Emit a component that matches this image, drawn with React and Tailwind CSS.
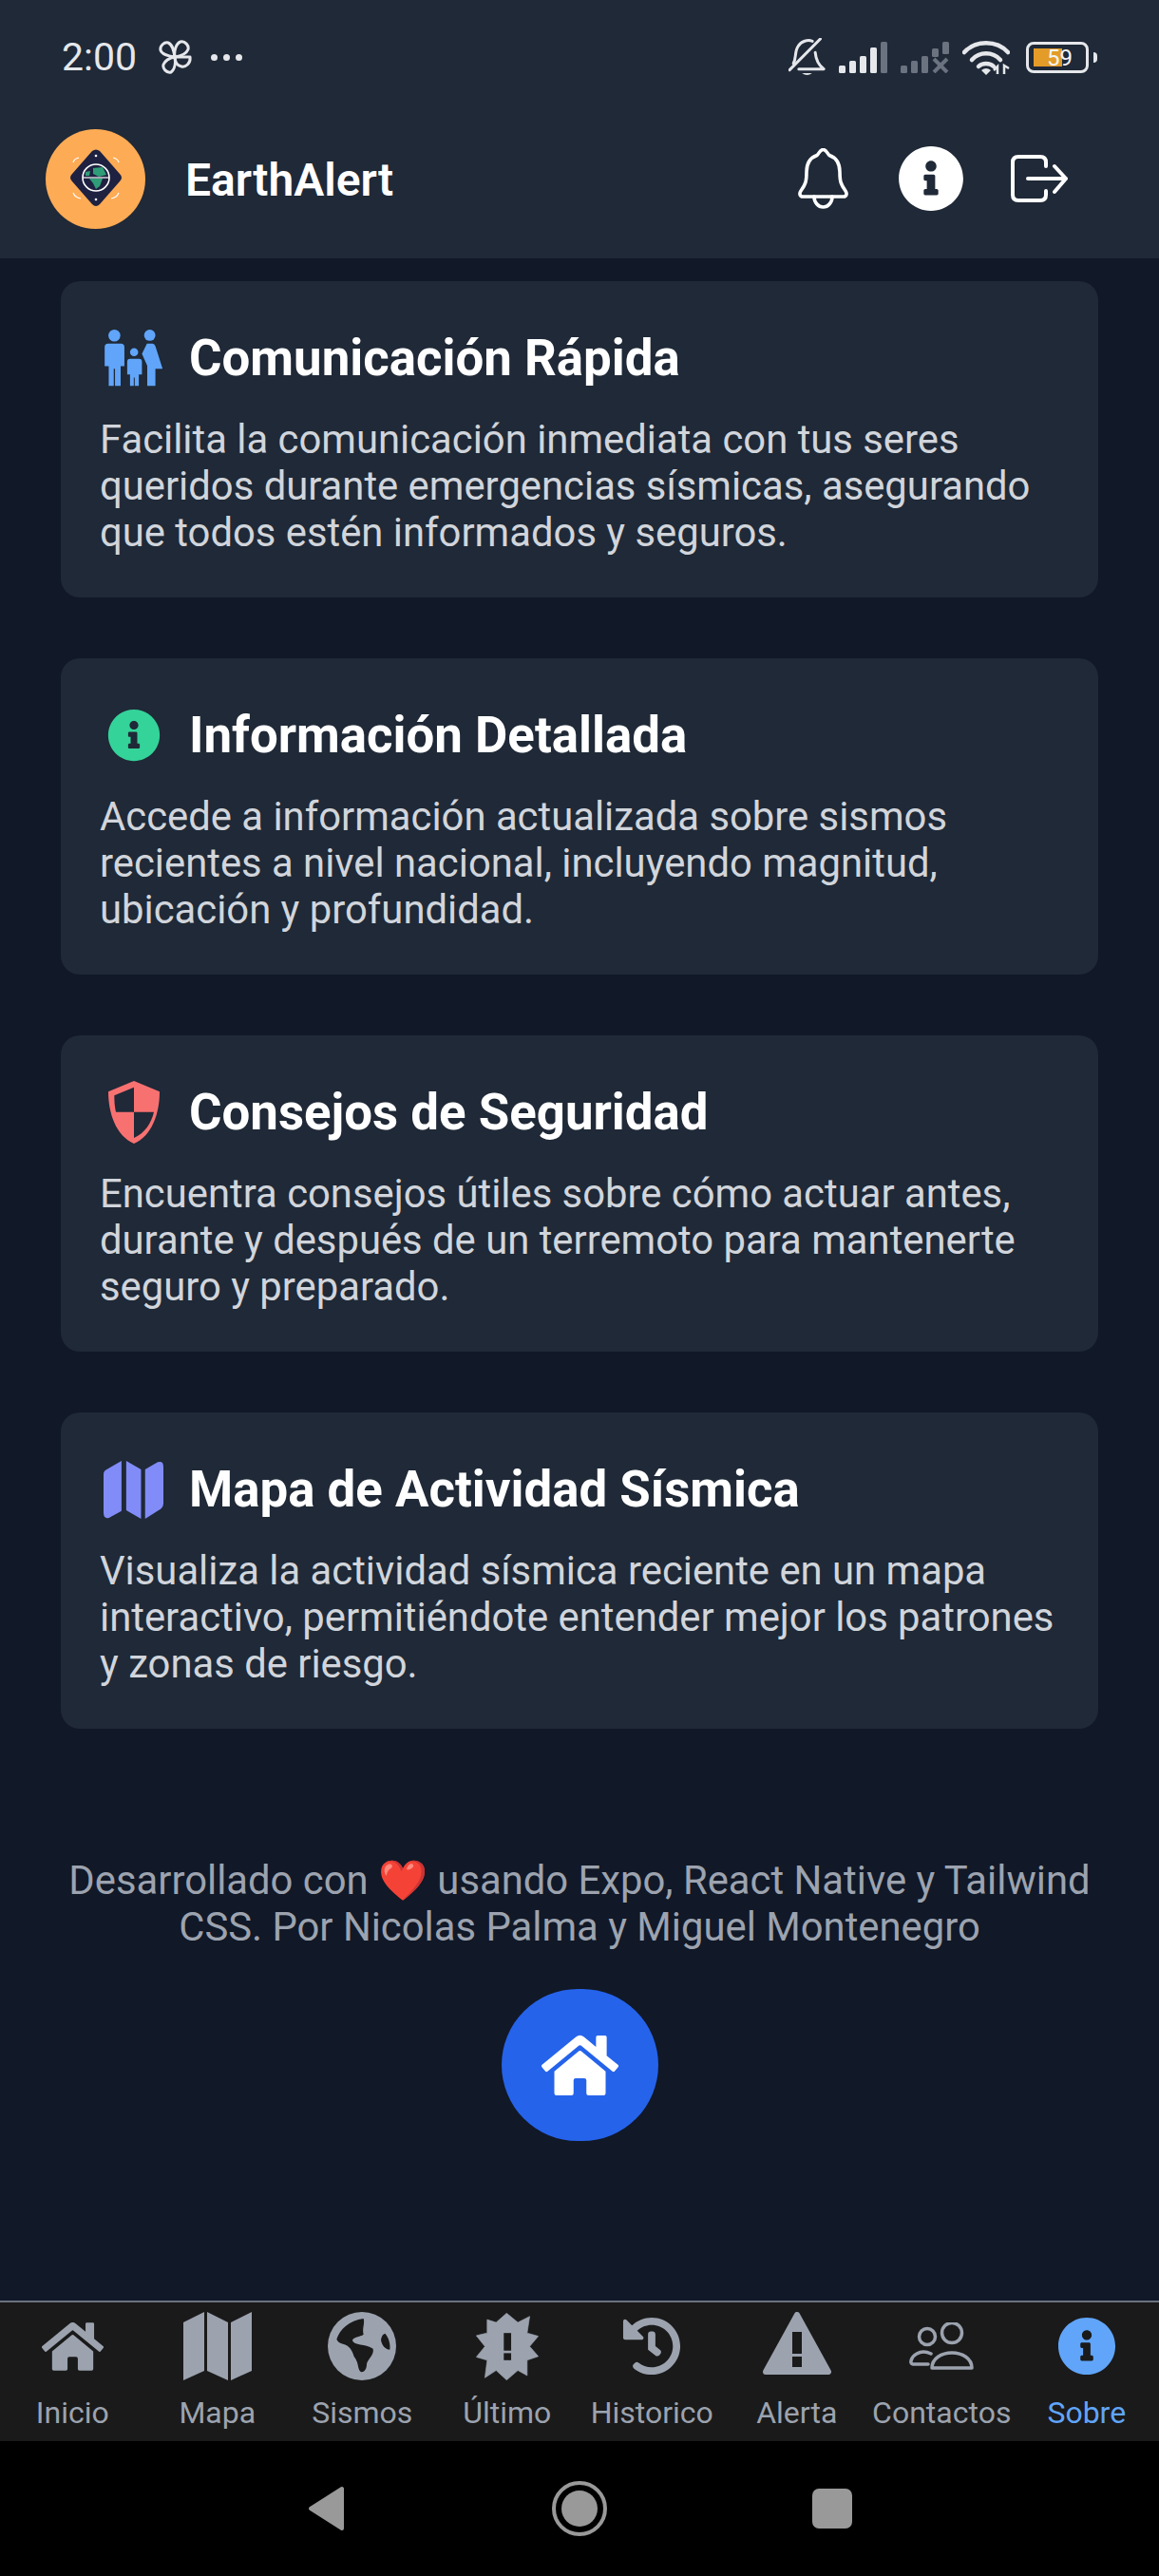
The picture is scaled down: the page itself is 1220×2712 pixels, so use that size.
import React from "react";
import { FaHome, FaHistory, FaInfoCircle } from "react-icons/fa";

const font = { fontFamily: "Roboto, sans-serif" };

function Fan() {
  return (
    <svg width="36" height="36" viewBox="0 0 36 36" fill="none" stroke="#e5e7eb" strokeWidth="3" strokeLinejoin="round">
      <path d="M18 18 C12 17 5 16 3 11 C2 6 7 2 11 3 C16 5 17 12 18 18 Z" />
      <path d="M18 18 C17 12 19 4 24 2 C29 1 33 6 32 10 C30 15 24 17 18 18 Z" />
      <path d="M18 18 H34 C35 25 29 29 25 28 C21 27 18 24 18 18 Z" />
      <path d="M18 18 C19 24 18 31 14 34 C9 35 5 30 6 26 C8 21 13 19 18 18 Z" />
    </svg>
  );
}

function Signal({ dim }) {
  const bars = [
    [0, 25, 8],
    [11, 20, 13],
    [22, 15, 18],
    [33, 6, 27],
    [44, 0, 33],
  ];
  return (
    <svg width="51" height="33" viewBox="0 0 51 33">
      {bars.map(([x, y, h], i) => {
        if (dim && i >= 3) {
          return <rect key={i} x={x} y={i === 3 ? y + 1 : y} width="7" height={i === 3 ? 9 : 13} rx="1.5" fill="#6b7280" />;
        }
        return <rect key={i} x={x} y={y} width="7" height={h} rx="1.5" fill={dim || i === 4 ? "#6b7280" : "#e5e7eb"} />;
      })}
      {dim && <path d="M35 18 L49 32 M49 18 L35 32" stroke="#6b7280" strokeWidth="4" />}
    </svg>
  );
}

function StatusRight() {
  return (
    <div className="flex items-center">
      <svg width="39" height="40" viewBox="30 32 116 120" fill="none" stroke="#e5e7eb" strokeWidth="9" strokeLinecap="round" strokeLinejoin="round">
        <path d="M45 112 C55 95 48 75 60 58 C70 42 90 36 105 42" />
        <path d="M114 78 C116 100 125 118 141 130 H62" />
        <path d="M33 133 L130 35" />
        <path d="M72 143 H104 Q88 155 72 143 Z" fill="#e5e7eb" stroke="none" />
      </svg>
      <div className="ml-[14px]"><Signal /></div>
      <div className="ml-[14px]"><Signal dim /></div>
      <svg className="ml-[14px]" width="50" height="38" viewBox="0 0 50 38" fill="none" stroke="#e5e7eb" strokeWidth="4.5" strokeLinecap="round">
        <path d="M2 14 C14 1 36 1 48 14" />
        <path d="M10 22 C18 13 32 13 40 22" />
        <path d="M17 29 C21 25 29 25 33 29" />
        <path d="M25 38 L20 33 Q25 29 30 33 Z" fill="#e5e7eb" stroke="none" />
        <path d="M37 37 V29 L33 33 M44 37 V28 L49 31" strokeWidth="2.5" strokeLinecap="butt" />
      </svg>
      <div className="relative ml-[17px] flex h-[33px] w-[66px] items-center rounded-[8px] border-[3px] border-[#e5e7eb] pl-[5px]">
        <div className="h-[19px] w-[30px] bg-[#e39c28]" />
        <span className="absolute left-[19px] top-[1px] text-[24px] leading-[26px] text-[#f3f4f6]">59</span>
      </div>
      <div className="ml-[5px] h-[11px] w-[4px] rounded-r-sm bg-[#e5e7eb]" />
    </div>
  );
}

function Logo() {
  return (
    <div className="flex h-[105px] w-[105px] shrink-0 items-center justify-center rounded-full bg-[#fdab55]">
      <svg width="105" height="105" viewBox="0 0 105 105">
        <path d="M49 23 Q53 20 57 23 L78 47 Q82 51 78 55 L57 79 Q53 83 49 79 L28 55 Q24 51 28 47 Z" fill="#1e2140" />
        <path d="M29 35 Q30 31 35 30 M71 30 Q76 31 77 35 M29 67 Q31 72 37 73 M69 73 Q75 72 77 67" fill="none" stroke="#fff" strokeWidth="1.2" />
        <circle cx="53" cy="51" r="14" fill="#1e2140" stroke="#fff" strokeWidth="1.6" />
        <path d="M50 41 L60 40 L64 48 L56 50 L50 47 Z" fill="#2f9e78" />
        <path d="M42 45 L47 44 L46 49 L42 49 Z M46 52 L60 52 L57 60 L53 63 L50 57 Z" fill="#2f9e78" />
        <path d="M39 51 H67" stroke="#fff" strokeWidth="1.2" />
        <circle cx="53" cy="28" r="1.3" fill="#fff" />
        <circle cx="53" cy="74" r="1.3" fill="#fff" />
      </svg>
    </div>
  );
}

function Family() {
  return (
    <svg width="63" height="60" viewBox="150 75 190 182" fill="#60a5fa">
      <circle cx="184" cy="94" r="19" />
      <path d="M164 120 H205 Q216 120 216 131 V192 H204 V255 H186 V200 H182 V255 H166 V192 H153 V131 Q153 120 164 120 Z" />
      <circle cx="247" cy="147" r="13" />
      <path d="M234 168 H263 Q272 168 272 177 V218 H262 V255 H249 V228 H246 V255 H234 V218 H225 V177 Q225 168 234 168 Z" />
      <circle cx="297" cy="93" r="18" />
      <path d="M288 120 H306 Q312 120 315 128 L338 200 H315 V255 H289 V190 L272 152 Z" />
    </svg>
  );
}

function Shield() {
  return (
    <svg width="54" height="66" viewBox="162 48 162 198">
      <path d="M243 48 L324 82 C324 150 300 222 243 246 C186 222 162 150 162 82 Z" fill="#f87171" />
      <path d="M243 68 L181 94 C181 112 182 130 186 146 H243 Z" fill="#1f2937" />
      <path d="M243 146 H306 C298 180 278 212 243 228 Z" fill="#1f2937" />
    </svg>
  );
}

function CardMap() {
  return (
    <svg width="64" height="63" viewBox="148 74 190 188" fill="#818cf8">
      <path d="M205 76 V235 L165 257 Q148 262 148 240 V118 Q148 108 158 103 Z" />
      <path d="M220 76 L267 103 V260 L220 233 Z" />
      <path d="M280 103 L320 80 Q338 74 338 95 V212 Q338 222 330 228 L280 260 Z" />
    </svg>
  );
}

function NavMap() {
  return (
    <svg width="72" height="72" viewBox="0 0 72 72" fill="#9ca3af">
      <path d="M22 0 L0 11 V72 L22 62 Z" />
      <path d="M25 0 L47 11 V72 L25 62 Z" />
      <path d="M50 11 L72 0 V62 L50 72 Z" />
    </svg>
  );
}

function Globe() {
  return (
    <svg width="72" height="72" viewBox="47 29 216 216">
      <circle cx="155" cy="137" r="108" fill="#9ca3af" />
      <path d="M75 115 C85 85 115 55 160 50 C165 65 155 80 160 100 C150 108 125 108 125 120 C130 135 165 130 190 145 C195 165 170 180 170 195 C170 215 155 225 148 215 C140 200 145 190 130 170 C125 150 115 135 95 130 C85 128 78 122 75 115 Z" fill="#1a1a1a" />
      <path d="M228 97 C240 110 245 130 243 148 C230 148 218 135 215 118 C216 105 222 98 228 97 Z" fill="#1a1a1a" />
    </svg>
  );
}

function Burst() {
  return (
    <svg width="66" height="71" viewBox="37 32 196 211">
      <polygon
        points="133,33 168,62 205,43 197,95 232,105 205,137 232,168 197,180 197,228 168,212 133,242 100,212 65,235 72,180 38,170 65,137 38,103 72,95 72,53 100,62"
        fill="#9ca3af"
        stroke="#9ca3af"
        strokeWidth="2"
        strokeLinejoin="round"
      />
      <rect x="124" y="95" width="23" height="55" fill="#1a1a1a" />
      <rect x="124" y="158" width="23" height="22" fill="#1a1a1a" />
    </svg>
  );
}

function Alert() {
  return (
    <svg width="72" height="67" viewBox="0 0 72 67" className="mb-[5px]">
      <path d="M36 3 L69 63 H3 Z" fill="#9ca3af" stroke="#9ca3af" strokeWidth="6" strokeLinejoin="round" />
      <rect x="31" y="21" width="10" height="23" fill="#1a1a1a" />
      <rect x="31" y="47" width="10" height="11" fill="#1a1a1a" />
    </svg>
  );
}

function Contacts() {
  return (
    <svg width="68" height="50" viewBox="0 0 68 50" fill="none" stroke="#9ca3af" strokeWidth="3.5" strokeLinejoin="round" strokeLinecap="round">
      <circle cx="19" cy="15" r="8.5" />
      <circle cx="45" cy="11" r="10.5" />
      <path d="M24 48 C24 38 34 32 45 32 C56 32 66 38 66 48 Z" />
      <path d="M20 44 H4 C0 44 2 36 8 33 C13 30 19 31 23 33" />
    </svg>
  );
}

function Bell() {
  return (
    <svg width="53" height="64" viewBox="0 0 53 64" fill="none" stroke="#fff" strokeWidth="3.6" strokeLinejoin="round" strokeLinecap="round">
      <path d="M26.5 1.5 C23 1.5 22 6 20 7.5 C13 10 9 15 9 25 C9 35 8 38 3 45 C1 48 2 51 5 51 H48 C51 51 52 48 50 45 C45 38 44 35 44 25 C44 15 40 10 33 7.5 C31 6 30 1.5 26.5 1.5 Z" />
      <path d="M17 51 A9.5 11 0 0 0 36 51" />
    </svg>
  );
}

function Logout() {
  return (
    <svg width="60" height="50" viewBox="0 0 60 50" fill="none" stroke="#fff" strokeWidth="4" strokeLinecap="round" strokeLinejoin="round">
      <path d="M37 12 V8 Q37 2 31 2 H8 Q2 2 2 8 V42 Q2 48 8 48 H31 Q37 48 37 42 V38" />
      <path d="M18 25 H58 M46 12 L58 25 L46 39" />
    </svg>
  );
}

const cards = [
  { icon: <Family />, title: "Comunicación Rápida", text: ["Facilita la comunicación inmediata con tus seres", "queridos durante emergencias sísmicas, asegurando", "que todos estén informados y seguros."] },
  { icon: <FaInfoCircle size={56} color="#34d399" />, title: "Información Detallada", text: ["Accede a información actualizada sobre sismos", "recientes a nivel nacional, incluyendo magnitud,", "ubicación y profundidad."] },
  { icon: <Shield />, title: "Consejos de Seguridad", text: ["Encuentra consejos útiles sobre cómo actuar antes,", "durante y después de un terremoto para mantenerte", "seguro y preparado."] },
  { icon: <CardMap />, title: "Mapa de Actividad Sísmica", text: ["Visualiza la actividad sísmica reciente en un mapa", "interactivo, permitiéndote entender mejor los patrones", "y zonas de riesgo."] },
];

const nav = [
  { label: "Inicio", icon: <FaHome size={65} color="#9ca3af" />, lab: "" },
  { label: "Mapa", icon: <NavMap />, lab: "" },
  { label: "Sismos", icon: <Globe />, lab: "mt-[2px]" },
  { label: "Último", icon: <Burst />, lab: "mt-[2px]" },
  { label: "Historico", icon: <FaHistory size={62} color="#9ca3af" />, lab: "" },
  { label: "Alerta", icon: <Alert />, lab: "" },
  { label: "Contactos", icon: <Contacts />, lab: "mt-[2px]" },
  { label: "Sobre", icon: <FaInfoCircle size={62} color="#60a5fa" />, lab: "", active: true },
];

export default function App() {
  return (
    <div style={font} className="flex h-[2712px] w-[1220px] flex-col overflow-hidden bg-[#111827]">
      <header className="h-[272px] shrink-0 bg-[#1f2937]">
        <div className="flex h-[120px] items-center justify-between pl-[65px] pr-[65px]">
          <div className="flex items-center">
            <span className="text-[41px] leading-[48px] text-[#e5e7eb]">2:00</span>
            <div className="ml-[22px]"><Fan /></div>
            <div className="ml-[20px] flex gap-[6px]">
              <div className="h-[7px] w-[7px] rounded-full bg-[#e5e7eb]" />
              <div className="h-[7px] w-[7px] rounded-full bg-[#e5e7eb]" />
              <div className="h-[7px] w-[7px] rounded-full bg-[#e5e7eb]" />
            </div>
          </div>
          <StatusRight />
        </div>
        <div className="flex h-[136px] items-center justify-between pl-[48px] pr-[96px]">
          <div className="flex items-center gap-[42px]">
            <Logo />
            <span className="pt-[3px] text-[48px] font-semibold leading-[56px] text-white">EarthAlert</span>
          </div>
          <div className="flex items-center">
            <Bell />
            <div className="ml-[52px]"><FaInfoCircle size={70} color="#fff" /></div>
            <div className="ml-[49px]"><Logout /></div>
          </div>
        </div>
      </header>

      <main className="flex flex-1 flex-col items-center overflow-hidden px-[64px] pt-[24px]">
        <div className="flex w-full flex-col gap-[64px]">
          {cards.map((c) => (
            <section key={c.title} className="h-[333px] rounded-[20px] bg-[#1f2937] px-[41px] pt-[48px]">
              <div className="flex h-[66px] items-center">
                <div className="ml-[4px] flex w-[63px] shrink-0 items-center justify-center">{c.icon}</div>
                <h2 className="ml-[27px] text-[52.8px] font-bold leading-[66px] text-white">{c.title}</h2>
              </div>
              <div className="mt-[28px] text-[41.8px] leading-[49px] text-[#d1d5db]">
                {c.text.map((t) => (
                  <div key={t} className="whitespace-nowrap">{t}</div>
                ))}
              </div>
            </section>
          ))}
        </div>
        <div className="mt-[135px] whitespace-nowrap text-center text-[41.8px] leading-[49px] text-[#9ca3af]">
          <div>Desarrollado con ❤️ usando Expo, React Native y Tailwind</div>
          <div>CSS. Por Nicolas Palma y Miguel Montenegro</div>
        </div>
        <div className="mt-[41px] flex h-[160px] w-[165px] items-center justify-center rounded-full bg-[#2563eb]">
          <FaHome size={81} color="#fff" />
        </div>
      </main>

      <nav className="grid h-[148px] shrink-0 grid-cols-8 border-t-[2px] border-[#6b7280] bg-[#1a1a1a] pt-[10px]">
        {nav.map((n) => (
          <div key={n.label} className="flex flex-col items-center">
            <div className="flex h-[72px] items-center justify-center">{n.icon}</div>
            <span className={`${n.lab} mt-[16px] text-[32px] leading-[36px] ${n.active ? "text-[#60a5fa]" : "text-[#9ca3af]"}`}>{n.label}</span>
          </div>
        ))}
      </nav>

      <div className="relative flex h-[142px] shrink-0 items-center justify-center bg-black">
        <svg width="40" height="48" viewBox="0 0 40 48" className="absolute left-[324px] top-[47px]">
          <path d="M36 3 V45 L3 24 Z" fill="#999" stroke="#999" strokeWidth="4" strokeLinejoin="round" />
        </svg>
        <div className="flex h-[58px] w-[58px] items-center justify-center rounded-full border-[4px] border-[#999]">
          <div className="h-[38px] w-[38px] rounded-full bg-[#999]" />
        </div>
        <div className="absolute left-[855px] top-[50px] h-[42px] w-[42px] rounded-[7px] bg-[#999]" />
      </div>
    </div>
  );
}
